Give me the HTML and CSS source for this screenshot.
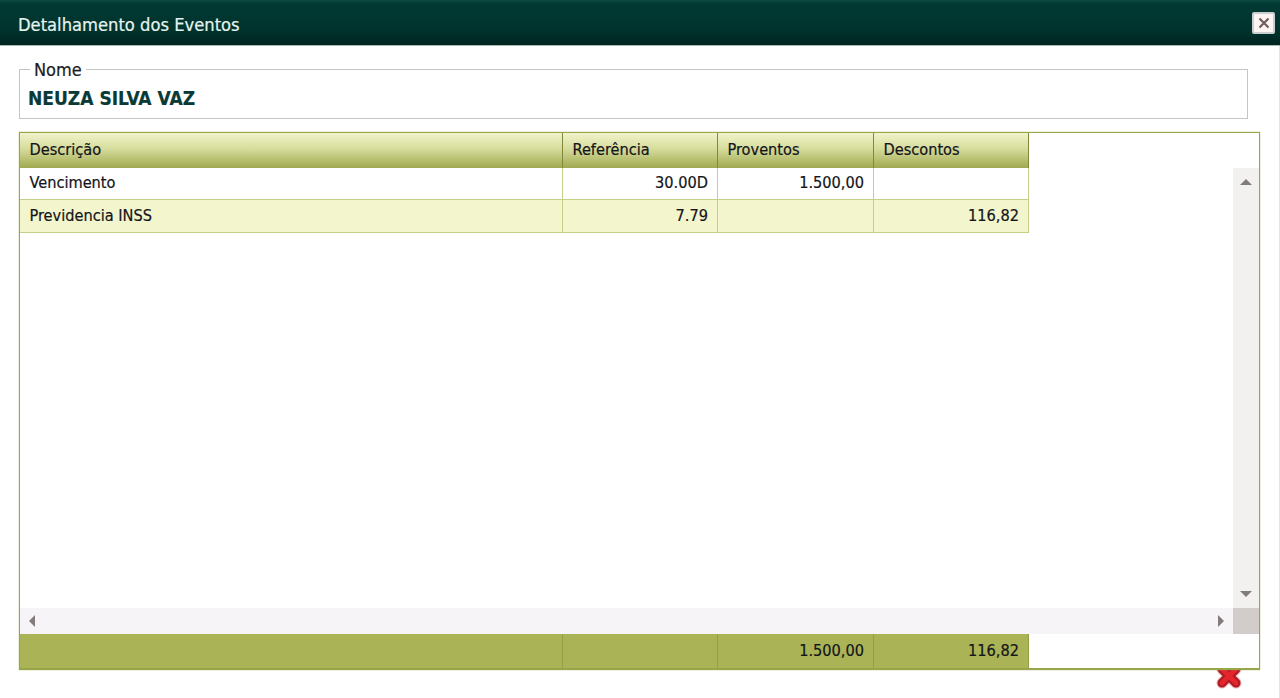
FILE: index.html
```html
<!DOCTYPE html>
<html lang="pt">
<head>
<meta charset="utf-8">
<title>Detalhamento dos Eventos</title>
<link rel="stylesheet" href="styles.css">
</head>
<body>
<div class="dialog">
  <header class="titlebar">
    <span class="title">Detalhamento dos Eventos</span>
    <button class="close" aria-label="Fechar">
      <svg width="12" height="12" viewBox="0 0 12 12"><path d="M1.5 1.5 L10.5 10.5 M10.5 1.5 L1.5 10.5" stroke="#6f5f62" stroke-width="2.2" fill="none"/></svg>
    </button>
  </header>
  <main class="content">
    <fieldset class="namebox">
      <legend>Nome</legend>
      <div class="name">NEUZA SILVA VAZ</div>
    </fieldset>
    <section class="grid">
      <div class="grid-head row">
        <div class="cell desc">Descrição</div>
        <div class="cell ref">Referência</div>
        <div class="cell pro">Proventos</div>
        <div class="cell dis">Descontos</div>
      </div>
      <div class="grid-body">
        <div class="rows">
          <div class="row data">
            <div class="cell desc">Vencimento</div>
            <div class="cell ref num">30.00D</div>
            <div class="cell pro num">1.500,00</div>
            <div class="cell dis num"></div>
          </div>
          <div class="row data alt">
            <div class="cell desc">Previdencia INSS</div>
            <div class="cell ref num">7.79</div>
            <div class="cell pro num"></div>
            <div class="cell dis num">116,82</div>
          </div>
        </div>
        <div class="vscroll">
          <svg width="12" height="8" viewBox="0 0 12 8"><path d="M0 7 L6 1 L12 7 Z" fill="#837a7c"/></svg>
          <svg width="12" height="8" viewBox="0 0 12 8"><path d="M0 1 L12 1 L6 7 Z" fill="#837a7c"/></svg>
        </div>
      </div>
      <div class="hscroll-line">
        <div class="hscroll">
          <svg width="8" height="12" viewBox="0 0 8 12"><path d="M7 0 L7 12 L1 6 Z" fill="#837a7c"/></svg>
          <svg width="8" height="12" viewBox="0 0 8 12"><path d="M1 0 L1 12 L7 6 Z" fill="#837a7c"/></svg>
        </div>
        <div class="corner"></div>
      </div>
      <div class="grid-foot row">
        <div class="cell desc"></div>
        <div class="cell ref"></div>
        <div class="cell pro num">1.500,00</div>
        <div class="cell dis num">116,82</div>
      </div>
    </section>
    <div class="actions">
      <svg width="26" height="26" viewBox="0 0 26 26">
        <path d="M6 6 L20 20 M20 6 L6 20" stroke="#f0b4b8" stroke-width="11" stroke-linecap="round" fill="none"/>
        <path d="M6 6 L20 20 M20 6 L6 20" stroke="#ad1a22" stroke-width="9" stroke-linecap="round" fill="none"/>
        <path d="M6 6 L20 20 M20 6 L6 20" stroke="#e4252d" stroke-width="5" stroke-linecap="round" fill="none"/>
      </svg>
    </div>
  </main>
</div>
</body>
</html>
```

FILE: styles.css
```css
* {
  box-sizing: border-box;
}

html,
body {
  margin: 0;
  height: 100%;
  overflow: hidden;
  background: #fff;
}

body {
  font-family: "DejaVu Sans Condensed", "DejaVu Sans", sans-serif;
  font-size: 16.2px;
  color: #14141a;
  -webkit-text-stroke: 0.2px currentColor;
}

.dialog {
  height: 698px;
  display: flex;
  flex-direction: column;
  border-right: 1px solid #e2e5e5;
}

.titlebar {
  flex: 0 0 46px;
  display: flex;
  align-items: center;
  justify-content: space-between;
  padding: 3px 5px 0 18px;
  margin-right: -1px;
  background: linear-gradient(#0e4a42 0, #013a33 4px, #00332d 30px, #01241f 100%);
  border-bottom: 1px solid #a9b8b5;
}

.title {
  font-size: 18.2px;
  color: #e6f4f0;
}

.close {
  width: 23px;
  height: 22px;
  padding: 0;
  margin-top: -3px;
  display: flex;
  align-items: center;
  justify-content: center;
  background: #fbf5f3;
  border: 2px solid #c9cfcd;
  border-radius: 2px;
}

.content {
  flex: 1;
  display: flex;
  flex-direction: column;
  padding: 13px 19px 0 19px;
  min-height: 0;
}

.namebox {
  margin: 0 12px 0 0;
  padding: 9px 8px 0;
  height: 60px;
  border: 1px solid #c4c4c4;
  flex: none;
}

.namebox legend {
  padding: 2px 4px 0;
  margin-left: 2px;
  font-size: 18px;
  line-height: 18px;
  color: #1c1c22;
}

.name {
  font-size: 19px;
  font-weight: bold;
  line-height: 20px;
  color: #0a3a36;
}

.grid {
  position: relative;
  z-index: 1;
  margin-top: 13px;
  flex: none;
  height: 538px;
  border: 1px solid #98a548;
  border-bottom-width: 2px;
  box-shadow: 0 0 1px #98a548;
  display: flex;
  flex-direction: column;
  background: #fff;
}

.row {
  display: flex;
  width: 1009px;
  flex: none;
}

.cell {
  border-right: 1px solid #98a548;
  padding: 0 9px 2px 9.5px;
  display: flex;
  align-items: center;
}

.desc {
  width: 543px;
}

.ref {
  width: 155px;
}

.pro {
  width: 156px;
}

.dis {
  width: 155px;
}

.num {
  justify-content: flex-end;
}

.grid-head {
  height: 35px;
  background: linear-gradient(#f2f3cb 0, #d6dc9c 45%, #a0a94f 100%);
}

.grid-head .cell {
  border-color: #7e8a3a;
}

.grid-body {
  flex: 1;
  display: flex;
  min-height: 0;
}

.rows {
  flex: 1;
}

.data {
  height: 33px;
  border-bottom: 1px solid #c6cf88;
}

.data .cell {
  border-color: #c6cf88;
}

.data:first-child {
  height: 32px;
}

.alt {
  background: #f3f6cd;
}

.vscroll {
  flex: 0 0 26px;
  background: #f3f1ef;
  display: flex;
  flex-direction: column;
  justify-content: space-between;
  align-items: center;
  padding: 10px 0;
}

.hscroll-line {
  flex: 0 0 26px;
  display: flex;
}

.hscroll {
  flex: 1;
  background: #f6f4f6;
  display: flex;
  align-items: center;
  justify-content: space-between;
  padding: 0 8px;
}

.corner {
  flex: 0 0 26px;
  background: #d2cdca;
}

.grid-foot {
  height: 34px;
  background: #aab456;
}

.grid-foot .cell {
  border-color: #949f45;
}

.actions {
  flex: none;
  display: flex;
  justify-content: flex-end;
  margin-top: -7px;
  padding-right: 18px;
  height: 29px;
}
```
